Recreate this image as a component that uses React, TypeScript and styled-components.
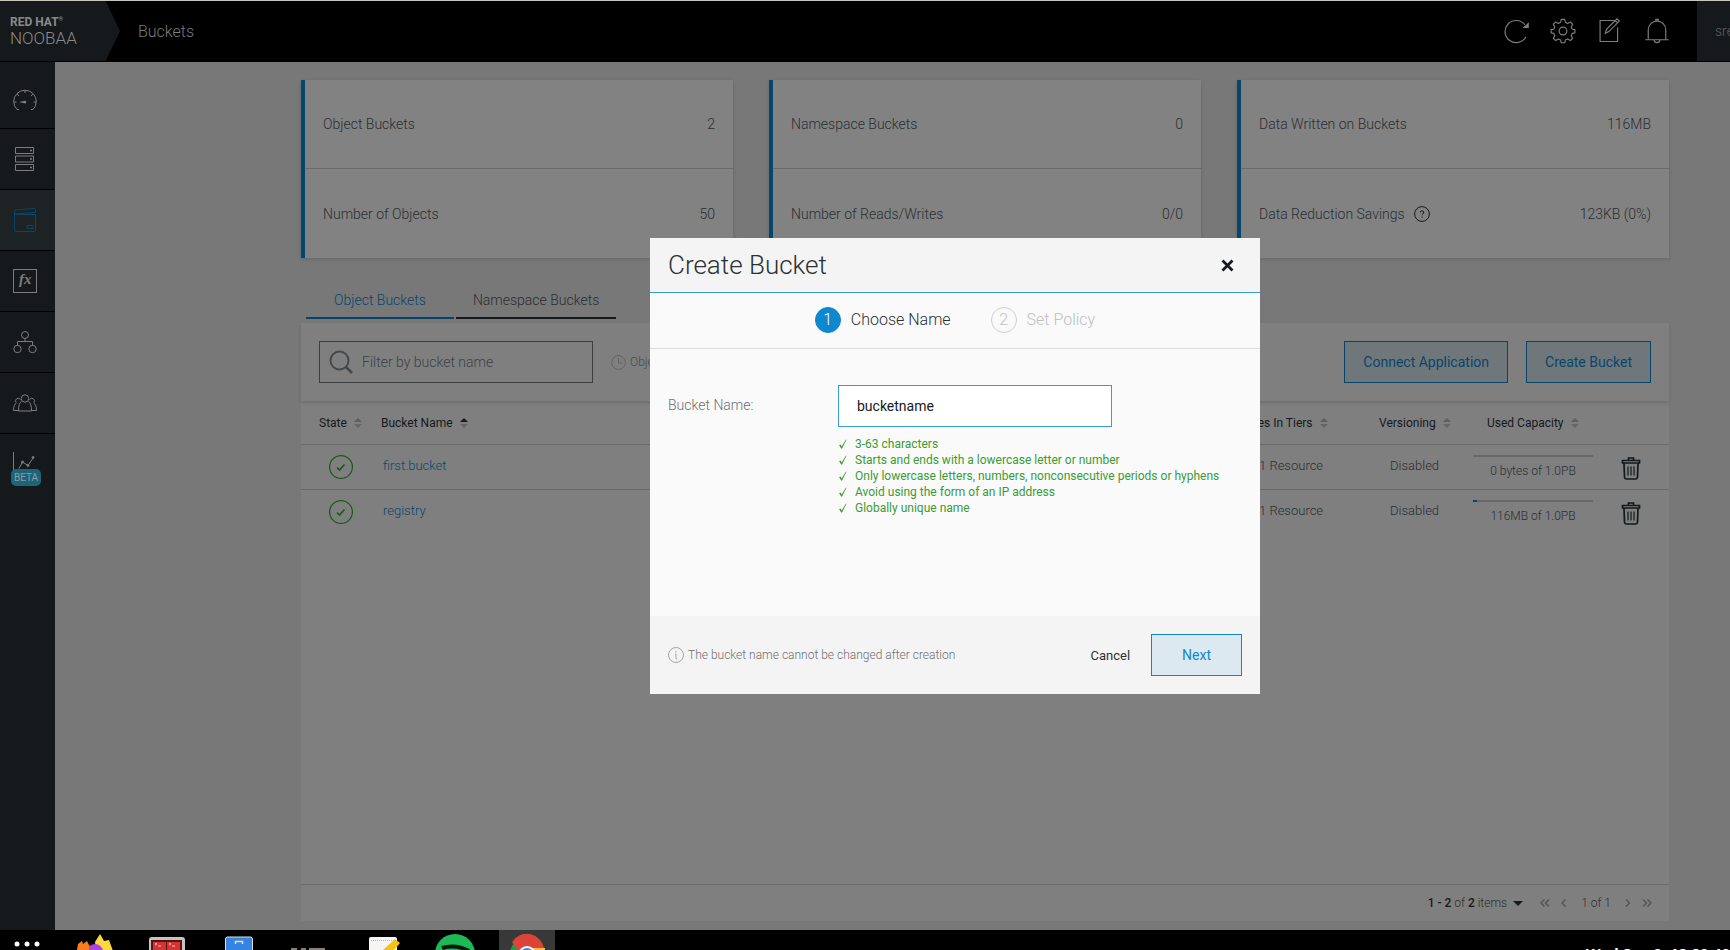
import React from 'react';
import styled, { createGlobalStyle } from 'styled-components';

const GlobalStyle = createGlobalStyle`
  * { box-sizing: border-box; }
  html, body, #root { height: 100%; }
  body {
    margin: 0;
    overflow: hidden;
    background: #000000;
    color: #2a2e31;
    font-family: Roboto, "Liberation Sans", sans-serif;
    font-size: 14px;
    font-weight: 300;
  }
  button, input, select { font-family: inherit; }
  a { text-decoration: none; }
`;

const Screen = styled.div`
  display: flex;
  flex-direction: column;
  height: 100vh;
  border-top: 1px solid #c6c6bc;
  overflow: hidden;
`;

/* ---------- header ---------- */

const Header = styled.header`
  flex: none;
  display: flex;
  align-items: center;
  height: 61px;
  border-bottom: 1px solid #000000;
  background: #000000;
`;

const Logo = styled.a`
  display: flex;
  flex-direction: column;
  justify-content: center;
  align-self: stretch;
  width: 120px;
  padding-left: 10px;
  background: #15191c;
  clip-path: polygon(0 0, 88% 0, 100% 50%, 88% 100%, 0 100%);
  color: #8a8a8a;
  font-size: 17px;
  line-height: 18px;
`;

const LogoTop = styled.span`
  font-size: 12px;
  font-weight: 700;
  line-height: 14px;
  sup { font-size: 6px; line-height: 0; }
`;

const PageTitle = styled.h1`
  flex: 1;
  margin: 0 0 0 18px;
  color: #7b7b7b;
  font-size: 16px;
  font-weight: 300;
`;

const HeaderActions = styled.div`
  display: flex;
  gap: 19px;
  margin-right: 26px;
`;

const IconButton = styled.button`
  display: flex;
  padding: 0;
  border: 0;
  background: none;
  color: ${(p) => p.color || '#7d7d7d'};
`;

const User = styled.div`
  display: flex;
  align-items: center;
  align-self: stretch;
  width: 33px;
  padding-left: 18px;
  overflow: hidden;
  background: #15191c;
  color: #5c5f60;
`;

/* ---------- side navigation ---------- */

const Body = styled.div`
  flex: 1;
  display: flex;
  min-height: 0;
`;

const Nav = styled.nav`
  flex: none;
  width: 55px;
  background: #15191c;
`;

const NavItem = styled.a<{ $active?: boolean; $first?: boolean }>`
  position: relative;
  display: flex;
  align-items: center;
  height: ${(p) => (p.$first ? 67 : 61)}px;
  padding: ${(p) => (p.$first ? 12 : 0)}px 0 0 13px;
  border-bottom: 1px solid #000000;
  background: ${(p) => (p.$active ? '#1d2225' : 'transparent')};
  color: ${(p) => (p.$active ? '#07466c' : '#7d7d7d')};
  &:last-child { border-bottom-color: transparent; }
`;

const Beta = styled.span`
  position: absolute;
  left: 11px;
  bottom: 8px;
  padding: 0 3px;
  border-radius: 5px;
  background: #1d6478;
  color: #8a9da3;
  font-size: 10px;
  font-weight: 400;
  line-height: 17px;
`;

/* ---------- content ---------- */

const Content = styled.main`
  flex: 1;
  display: flex;
  flex-direction: column;
  min-width: 0;
  padding: 18px 61px 9px 246px;
  background: #787878;
`;

const Cards = styled.section`
  display: grid;
  grid-template-columns: repeat(3, 1fr);
  gap: 36px;
`;

const Card = styled.div`
  border-left: 4px solid #07466c;
  background: #828282;
  box-shadow: 0 1px 4px rgba(0, 0, 0, 0.15);
`;

const Stat = styled.div`
  display: flex;
  justify-content: space-between;
  align-items: center;
  height: 88px;
  padding: 0 18px;
  & + & { border-top: 1px solid #6a6a6a; height: 90px; }
`;

const StatLabel = styled.span`
  display: flex;
  align-items: center;
  gap: 9px;
`;

const Tabs = styled.div`
  display: flex;
  gap: 2px;
  margin: 24px 5px 4px;
`;

const Tab = styled.button<{ $active?: boolean }>`
  height: 37px;
  padding: 0 ${(p) => (p.$active ? 28 : 17)}px;
  border: 0;
  border-bottom: 2px solid ${(p) => (p.$active ? '#07466c' : '#15191c')};
  background: none;
  color: ${(p) => (p.$active ? '#07466c' : '#2a2e31')};
  font-size: 14px;
  font-weight: 300;
`;

const Panel = styled.section`
  flex: 1;
  display: flex;
  flex-direction: column;
  min-height: 0;
  background: #7f7f7f;
`;

const Toolbar = styled.div`
  display: flex;
  align-items: center;
  gap: 18px;
  height: 78px;
  padding: 0 18px;
  box-shadow: 0 2px 3px rgba(0, 0, 0, 0.12);
`;

const Search = styled.label`
  display: flex;
  align-items: center;
  gap: 9px;
  width: 274px;
  height: 42px;
  padding-left: 9px;
  border: 1px solid #3c3f41;
  color: #44484b;
`;

const SearchInput = styled.input`
  flex: 1;
  min-width: 0;
  padding: 0;
  border: 0;
  outline: 0;
  background: none;
  font-size: 14px;
  font-weight: 300;
  &::placeholder { color: #3d4144; opacity: 1; }
`;

const Note = styled.span`
  flex: 1;
  display: flex;
  align-items: center;
  gap: 4px;
  color: #474b4d;
  font-size: 12px;
  svg { color: #636363; }
`;

const ActionButton = styled.button<{ $bright?: boolean }>`
  height: 42px;
  padding: 0 ${(p) => (p.$bright ? 30 : 18)}px;
  border: 1px solid ${(p) => (p.$bright ? '#0f87cf' : '#07466c')};
  background: ${(p) => (p.$bright ? '#dce9f1' : '#70777b')};
  color: ${(p) => (p.$bright ? '#0f87cf' : '#07466c')};
  font-size: 14px;
  font-weight: 400;
`;

const Table = styled.table`
  width: 100%;
  border-collapse: collapse;
  table-layout: fixed;
`;

const Th = styled.th`
  height: 43px;
  padding: 2px 0 0;
  border-bottom: 1px solid #6a6a6a;
  color: #15191c;
  font-size: 12px;
  font-weight: 400;
  text-align: left;
  white-space: nowrap;
  svg { margin-left: 7px; vertical-align: -1px; }
`;

const Row = styled.tr`
  height: 45px;
  border-bottom: 1px solid #6a6a6a;
  &:last-child { border-bottom: 0; }
`;

const Td = styled.td`
  padding: 0 0 2px;
  font-size: 13px;
  line-height: 20px;
  svg { display: block; }
  ${IconButton} { margin: 4px 0 0 8px; }
`;

const BucketLink = styled.a`
  padding-left: 2px;
  color: #07466c;
`;

const Capacity = styled.div`
  width: 120px;
  text-align: center;
  font-size: 12px;
  line-height: 16px;
`;

const Track = styled.div`
  height: 2px;
  margin: 2px 0 6px;
  background: #696969;
`;

const Fill = styled.div`
  height: 2px;
  background: #07466c;
`;

const Inset = styled.span`
  padding-left: 18px;
`;

const UsedLabel = styled.span`
  padding-left: 14px;
`;

const State = styled.div`
  padding: 3px 0 0 28px;
  color: #1b5a18;
`;

const Resource = styled.span`
  padding-left: 45px;
`;

const Versioning = styled.span`
  padding-left: 11px;
`;

const Pager = styled.footer`
  display: flex;
  justify-content: flex-end;
  align-items: center;
  gap: 11px;
  height: 37px;
  margin-top: auto;
  padding-right: 17px;
  border-top: 1px solid #6a6a6a;
  font-size: 12px;
  b { color: #15191c; font-weight: 500; }
`;

const PageCount = styled.span`
  padding: 0 3px;
`;

const PageSize = styled.button`
  display: flex;
  align-items: center;
  gap: 6px;
  margin-right: 6px;
  padding: 0;
  border: 0;
  background: none;
  color: #2a2e31;
  font-size: 12px;
  font-weight: 300;
`;

/* ---------- dialog ---------- */

const Overlay = styled.div`
  position: fixed;
  inset: 0;
  display: flex;
  justify-content: center;
  align-items: center;
  padding: 0 0 18px 180px;
`;

const Dialog = styled.form`
  display: flex;
  flex-direction: column;
  width: 610px;
  background: #fafafa;
`;

const DialogHeader = styled.div`
  display: flex;
  justify-content: space-between;
  align-items: center;
  height: 55px;
  padding: 0 26px 0 18px;
  border-bottom: 1px solid #3b9cd3;
  background: #f4f4f4;
`;

const DialogTitle = styled.h2`
  margin: 0;
  color: #2a3036;
  font-size: 26px;
  font-weight: 300;
`;

const Steps = styled.ol`
  display: flex;
  justify-content: center;
  align-items: center;
  gap: 40px;
  height: 56px;
  margin: 0;
  padding: 0 0 2px;
  border-bottom: 1px solid #dcdcdc;
  list-style: none;
`;

const Step = styled.li<{ $active?: boolean }>`
  display: flex;
  align-items: center;
  gap: 10px;
  color: ${(p) => (p.$active ? '#2a3036' : '#c0c0c0')};
  font-size: 16px;
  font-weight: 300;
`;

const StepNumber = styled.span<{ $active?: boolean }>`
  display: flex;
  justify-content: center;
  align-items: center;
  width: 26px;
  height: 26px;
  border: 1px solid ${(p) => (p.$active ? '#0f87cf' : '#cfcfcf')};
  border-radius: 50%;
  background: ${(p) => (p.$active ? '#0f87cf' : 'transparent')};
  color: ${(p) => (p.$active ? '#ffffff' : '#c0c0c0')};
`;

const Field = styled.div`
  display: grid;
  grid-template-columns: 170px 1fr;
  min-height: 267px;
  padding: 36px 18px 0;
`;

const FieldLabel = styled.label`
  color: #6d7072;
  font-size: 14px;
  line-height: 40px;
`;

const NameInput = styled.input`
  width: 274px;
  height: 42px;
  padding: 0 18px;
  border: 1px solid #3b9cd3;
  outline: 0;
  background: #ffffff;
  color: #15191c;
  font-size: 14px;
  font-weight: 400;
`;

const Rules = styled.ul`
  margin: 9px 0 0;
  padding: 0;
  color: #3c9b35;
  font-size: 12px;
  font-weight: 400;
  line-height: 16px;
  list-style: none;
  white-space: nowrap;
`;

const Rule = styled.li`
  display: flex;
  align-items: center;
  gap: 7px;
`;

const DialogFooter = styled.div`
  display: flex;
  align-items: center;
  gap: 21px;
  height: 78px;
  padding: 0 18px;
  background: #f4f4f4;
`;

const Hint = styled.span`
  flex: 1;
  display: flex;
  align-items: center;
  gap: 4px;
  color: #6d7072;
  font-size: 12px;
`;

const CancelButton = styled.button`
  padding: 0;
  border: 0;
  background: none;
  color: #2a3036;
  font-size: 13px;
  font-weight: 400;
`;

/* ---------- desktop dock ---------- */

const Dock = styled.footer`
  flex: none;
  display: flex;
  justify-content: space-between;
  height: 20px;
  overflow: hidden;
  background: #000000;
  color: #ffffff;
`;

const Clock = styled.time`
  margin-top: 13px;
  font-family: "Open Sans", sans-serif;
  font-size: 15px;
  font-weight: 700;
  line-height: 20px;
  white-space: nowrap;
`;

type IconProps = { size?: number; children: React.ReactNode };

const Icon = ({ size = 24, children }: IconProps) => (
  <svg width={size} height={size} viewBox="0 0 24 24" fill="none" stroke="currentColor" aria-hidden="true">
    {children}
  </svg>
);

const SortIcon = ({ active }: { active?: boolean }) => (
  <svg width="8" height="10" viewBox="0 0 8 10" aria-hidden="true">
    <path d="M0 4 4 0l4 4z" fill={active ? '#15191c' : '#5f5f5f'} />
    <path d="M0 6h8l-4 4z" fill="#666666" />
  </svg>
);

const TrashIcon = () => (
  <Icon>
    <path d="M5 7.500 5.500 21q.2 2 2 2h9q1.800 0 2-2L19 7.500M3.500 4.500h17v2.500h-17zM9.500 4.500V2h5v2.500" strokeWidth="1.700" />
    <path d="M9 10.500v9M12 10.500v9M15 10.500v9" strokeWidth="1.200" />
  </Icon>
);

const Chevron = ({ double, left, label }: { double?: boolean; left?: boolean; label: string }) => (
  <IconButton type="button" color="#565656" aria-label={label}>
    <svg width={double ? 10 : 6} height="8" viewBox={`0 0 ${double ? 10 : 6} 8`} fill="none" stroke="currentColor" strokeWidth="1.500">
      <path d={left ? 'M4.500.5 1 4l3.500 3.500' : 'M1 .5 4.500 4 1 7.500'} />
      {double && <path d={left ? 'M9 .5 5.500 4 9 7.500' : 'M5.500.5 9 4 5.500 7.500'} />}
    </svg>
  </IconButton>
);

const navItems = [
  {
    label: 'Overview',
    icon: (
      <>
        <path d="M6 20.500H4A11.300 11.300 0 1 1 20 20.500h-2M12 1.500V4M1 13h2.500M20.500 13H23M4.200 5.200 6 7M19.800 5.200 18 7" />
        <path d="M6 13.100l6-1.300a1.200 1.200 0 0 1 0 2.600z" fill="currentColor" stroke="none" />
      </>
    ),
  },
  {
    label: 'Resources',
    icon: <path d="M2.500.5h18v6h-18zM2.500 9h18v6h-18zM2.500 17.500h18v6h-18zM17 3.500h2M17 12h2M17 20.500h2M18 2.500v2M18 11v2M18 19.500v2" />,
  },
  {
    label: 'Buckets',
    icon: <path d="M1.500 6.500h21v15.500q0 1.500-1.500 1.500H3q-1.500 0-1.500-1.500V3.500q0-1.500 1.500-1.700L21 .5q1.500 0 1.500 1.500v2.500L1.500 6M14 17.500h6v3h-6z" />,
  },
  {
    label: 'Functions',
    icon: (
      <>
        <rect x=".5" y=".5" width="23" height="23" />
        <text x="6" y="15" fill="currentColor" stroke="none" fontFamily="Liberation Serif, serif" fontStyle="italic" fontWeight="700" fontSize="15">fx</text>
      </>
    ),
  },
  {
    label: 'Cluster',
    icon: (
      <>
        <circle cx="12" cy="5" r="3.500" />
        <circle cx="4.500" cy="19" r="3.700" />
        <circle cx="19.500" cy="19" r="3.700" />
        <path d="M12 8.500v3M4.500 15.500v-4h15v4" />
      </>
    ),
  },
  {
    label: 'Accounts',
    icon: (
      <>
        <circle cx="12" cy="7.500" r="3.700" />
        <path d="M8.500 10.500q-3 1.500-3 9.500h13q0-8-3-9.500" />
        <path d="M7.500 8.500a2.500 2.500 0 1 0-4.500 3M16.500 8.500a2.500 2.500 0 1 1 4.500 3M3.500 12q-3 1.500-3 7.500h5M20.500 12q3 1.500 3 7.500h-5" />
      </>
    ),
  },
  {
    label: 'Analytics',
    beta: true,
    icon: (
      <>
        <path d="M.5-1v24h23M6 16.500 9.500 10l5.500 3.500L20 6" />
        <g fill="currentColor"><circle cx="9.500" cy="10" r="1" /><circle cx="15" cy="13.500" r="1" /><circle cx="20" cy="5.500" r="1" /></g>
      </>
    ),
  },
];

const stats = [
  [['Object Buckets', '2'], ['Number of Objects', '50']],
  [['Namespace Buckets', '0'], ['Number of Reads/Writes', '0/0']],
  [['Data Written on Buckets', '116MB'], ['Data Reduction Savings', '123KB (0%)']],
];

const buckets = [
  { name: 'first.bucket', used: '0 bytes of 1.0PB', percent: 0 },
  { name: 'registry', used: '116MB of 1.0PB', percent: 3 },
];

const rules = [
  '3-63 characters',
  'Starts and ends with a lowercase letter or number',
  'Only lowercase letters, numbers, nonconsecutive periods or hyphens',
  'Avoid using the form of an IP address',
  'Globally unique name',
];

const TopBar = () => (
  <Header>
    <Logo href="#">
      <LogoTop>RED HAT<sup>®</sup></LogoTop>
      NOOBAA
    </Logo>
    <PageTitle>Buckets</PageTitle>
    <HeaderActions>
      <IconButton aria-label="Refresh">
        <Icon size={28}>
          <path d="M20.500 17A9.500 9.500 0 1 1 19.500 6.500" />
          <path d="m17.500 9.500 5.500-5v5z" fill="currentColor" stroke="none" />
        </Icon>
      </IconButton>
      <IconButton aria-label="Settings">
        <Icon size={28}>
          <path d="M10.500 2h3l.5 2.500 2 1 2.300-1.300 2 2L19 8.500l1 2 2.200.3v2.800l-2.200.4-1 2 1.300 2.200-2 2L16 18.800l-2 1-.5 2.300h-3l-.5-2.300-2-1-2.300 1.400-2-2L5 16l-1-2-2.200-.4v-2.800l2.200-.3 1-2-1.300-2.300 2-2L8 5.500l2-1z" strokeLinejoin="round" />
          <circle cx="12" cy="12" r="3.300" />
        </Icon>
      </IconButton>
      <IconButton aria-label="Audit log">
        <Icon size={28}>
          <path d="M16 3H3.500v18h15V9M8 14l1-3.500L18 1.500l2 2-9 9zM16.500 3l2 2" />
        </Icon>
      </IconButton>
      <IconButton aria-label="Alerts">
        <Icon size={28}>
          <path d="M2 19.500h20M4.500 19.500V11a7.500 7.500 0 0 1 15 0v8.500M11 3.500V2h2v1.500M9.500 19.500a2.500 2.500 0 0 0 5 0" />
        </Icon>
      </IconButton>
    </HeaderActions>
    <User>sree</User>
  </Header>
);

const BucketsTable = () => (
  <Table>
    <colgroup>
      <col style={{ width: 80 }} />
      <col />
      <col style={{ width: 165 }} />
      <col style={{ width: 94 }} />
      <col style={{ width: 138 }} />
      <col style={{ width: 58 }} />
    </colgroup>
    <thead>
      <tr>
        <Th><Inset>State<SortIcon /></Inset></Th>
        <Th>Bucket Name<SortIcon active /></Th>
        <Th>Resources In Tiers<SortIcon /></Th>
        <Th>Versioning<SortIcon /></Th>
        <Th><UsedLabel>Used Capacity<SortIcon /></UsedLabel></Th>
        <Th aria-label="Actions" />
      </tr>
    </thead>
    <tbody>
      {buckets.map((bucket) => (
        <Row key={bucket.name}>
          <Td>
            <State>
              <Icon>
                <circle cx="12" cy="12" r="11.400" strokeWidth="1.200" />
                <path d="m8 12.500 2.500 2.500 5-5.500" strokeWidth="1.600" />
              </Icon>
            </State>
          </Td>
          <Td><BucketLink href="#">{bucket.name}</BucketLink></Td>
          <Td><Resource>1 Resource</Resource></Td>
          <Td><Versioning>Disabled</Versioning></Td>
          <Td>
            <Capacity>
              <Track><Fill style={{ width: `${bucket.percent}%` }} /></Track>
              {bucket.used}
            </Capacity>
          </Td>
          <Td><IconButton color="#15191c" aria-label={`Delete ${bucket.name}`}><TrashIcon /></IconButton></Td>
        </Row>
      ))}
    </tbody>
  </Table>
);

const CreateBucketDialog = () => (
  <Overlay>
    <Dialog role="dialog" aria-labelledby="dialog-title" onSubmit={(e) => e.preventDefault()}>
      <DialogHeader>
        <DialogTitle id="dialog-title">Create Bucket</DialogTitle>
        <IconButton type="button" color="#15191c" aria-label="Close">
          <svg width="13" height="13" viewBox="0 0 13 13" fill="none" stroke="currentColor" strokeWidth="2.800">
            <path d="m1.500 1.500 10 10m0-10-10 10" />
          </svg>
        </IconButton>
      </DialogHeader>
      <Steps>
        <Step $active><StepNumber $active>1</StepNumber>Choose Name</Step>
        <Step><StepNumber>2</StepNumber>Set Policy</Step>
      </Steps>
      <Field>
        <FieldLabel htmlFor="bucket-name">Bucket Name:</FieldLabel>
        <div>
          <NameInput id="bucket-name" defaultValue="bucketname" />
          <Rules>
            {rules.map((rule) => (
              <Rule key={rule}>
                <svg width="10" height="10" viewBox="0 0 10 10" fill="currentColor">
                  <path d="M1 6l1.500-.6L3.700 7.500 7.800.8h.7L4 9.500h-.8z" />
                </svg>
                {rule}
              </Rule>
            ))}
          </Rules>
        </div>
      </Field>
      <DialogFooter>
        <Hint>
          <svg width="16" height="16" viewBox="0 0 16 16" fill="none" stroke="#a5a5a5">
            <circle cx="8" cy="8" r="7.500" />
            <path d="M8 4v1.500M7 7h1v5h1" />
          </svg>
          The bucket name cannot be changed after creation
        </Hint>
        <CancelButton type="button">Cancel</CancelButton>
        <ActionButton $bright>Next</ActionButton>
      </DialogFooter>
    </Dialog>
  </Overlay>
);

const DesktopDock = () => (
  <Dock>
    <svg width="560" height="20" viewBox="0 0 560 20" aria-hidden="true">
      <g fill="#ffffff"><circle cx="17" cy="14" r="2.500" /><circle cx="27" cy="14" r="2.500" /><circle cx="37" cy="14" r="2.500" /></g>
      <path d="M77 20l1-6 4-3 1 3 4-3 2 4 6 6z" fill="#ff7b1f" />
      <path d="M95 12l5-8 4 7 5-1 4 11H96z" fill="#ffd93b" />
      <path d="M89 17q2-3 7-3 5 1 7 6H89z" fill="#b03fe8" />
      <rect x="149" y="7" width="36" height="20" rx="3" fill="#c4c4c0" />
      <rect x="151" y="10" width="31" height="14" fill="#5b1212" />
      <path d="M153 12h13v8h-13zM167 12h13v8h-13z" fill="#d63434" />
      <path d="m155 13 2 1-2 1M158 16h3m8-3 2 1-2 1m3 1h3" fill="none" stroke="#ffb5b5" />
      <rect x="225.500" y="7" width="27" height="18" rx="2" fill="#3584e4" stroke="#deddda" />
      <path d="M235.500 14v-2.500h7V14" fill="none" stroke="#deddda" strokeWidth="1.500" />
      <path d="M291 19h6M301 19h5M309 19h16" stroke="#8a7c7c" strokeWidth="2" />
      <rect x="369" y="7" width="28" height="18" rx="2" fill="#f6f5f4" />
      <path d="M371 10.500h24" stroke="#b9b9b5" strokeDasharray="1 1" />
      <path d="m383 20 12-11 5 4-6 7z" fill="#f5c211" />
      <circle cx="455" cy="24" r="20" fill="#1db954" />
      <path d="M442 18q14-4 27 3" fill="none" stroke="#0b1a10" strokeWidth="4" />
      <rect x="499" width="56" height="20" fill="#383838" />
      <path d="M510 24a17 17 0 0 1 5-12l8 12z" fill="#1e9b4f" />
      <path d="M512 12a17.500 17.500 0 0 1 32 6h-17l-7 6z" fill="#db4437" />
      <path d="M530 18h15v4h-15z" fill="#fdbd3a" />
      <circle cx="527" cy="25" r="9" fill="#ffffff" />
      <circle cx="527" cy="25" r="7" fill="#3b82e8" />
    </svg>
    <Clock>Wed Sep 9, 12:20:40</Clock>
  </Dock>
);

const App = () => (
  <>
    <GlobalStyle />
    <Screen>
      <TopBar />
      <Body>
        <Nav>
          {navItems.map((item, i) => (
            <NavItem key={item.label} href="#" aria-label={item.label} $first={i === 0} $active={item.label === 'Buckets'}>
              <Icon>{item.icon}</Icon>
              {item.beta && <Beta>BETA</Beta>}
            </NavItem>
          ))}
        </Nav>
        <Content>
          <Cards>
            {stats.map((card) => (
              <Card key={card[0][0]}>
                {card.map(([label, value]) => (
                  <Stat key={label}>
                    <StatLabel>
                      {label}
                      {label === 'Data Reduction Savings' && (
                        <svg width="16" height="16" viewBox="0 0 16 16" fill="none" stroke="#15191c">
                          <circle cx="8" cy="8" r="7.400" />
                          <path d="M6.300 6.500a1.700 1.700 0 1 1 2.500 1.500q-.8.400-.8 1.300M8 10.500v1.200" />
                        </svg>
                      )}
                    </StatLabel>
                    <span>{value}</span>
                  </Stat>
                ))}
              </Card>
            ))}
          </Cards>
          <Tabs>
            <Tab $active>Object Buckets</Tab>
            <Tab>Namespace Buckets</Tab>
          </Tabs>
          <Panel>
            <Toolbar>
              <Search>
                <Icon>
                  <circle cx="10.500" cy="10.500" r="9" strokeWidth="2" />
                  <path d="m17 17 6 6" strokeWidth="2.500" />
                </Icon>
                <SearchInput placeholder="Filter by bucket name" aria-label="Filter by bucket name" />
              </Search>
              <Note>
                <svg width="15" height="15" viewBox="0 0 15 15" fill="none" stroke="currentColor">
                  <circle cx="7.500" cy="7.500" r="6.900" />
                  <path d="M7.500 3v5h4" />
                </svg>
                Object
              </Note>
              <ActionButton>Connect Application</ActionButton>
              <ActionButton>Create Bucket</ActionButton>
            </Toolbar>
            <BucketsTable />
            <Pager>
              <PageSize>
                <span><b>1 - 2</b> of <b>2</b> items</span>
                <svg width="10" height="5" viewBox="0 0 10 5"><path d="M0 0h10L5 5z" fill="#15191c" /></svg>
              </PageSize>
              <Chevron double left label="First page" />
              <Chevron left label="Previous page" />
              <PageCount>1 of 1</PageCount>
              <Chevron label="Next page" />
              <Chevron double label="Last page" />
            </Pager>
          </Panel>
        </Content>
      </Body>
      <DesktopDock />
    </Screen>
    <CreateBucketDialog />
  </>
);

export default App;
